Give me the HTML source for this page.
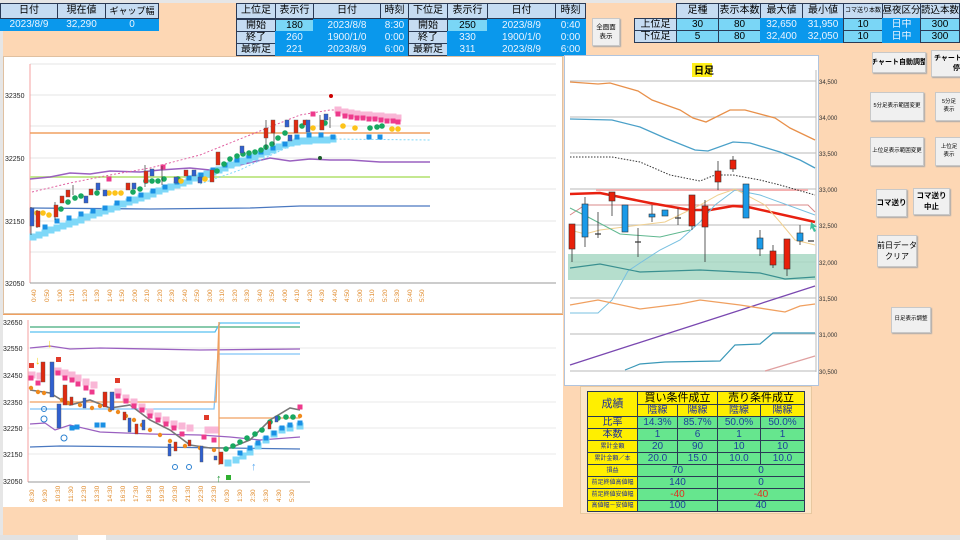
<!DOCTYPE html>
<html><head><meta charset="utf-8">
<style>
*{margin:0;padding:0;box-sizing:border-box}
body{width:960px;height:540px;overflow:hidden;background:#fdd7b4;font-family:"Liberation Sans","Noto Sans CJK JP",sans-serif;position:relative}
.c{position:absolute;display:flex;align-items:center;justify-content:center;font-size:10px;line-height:1;white-space:nowrap;overflow:hidden;border:1px solid #2a3a55}
.h{background:#c6dcf2;color:#000}
.b{background:#0a98ec;color:#eaf4ff;border-color:#0a98ec}
.lb{background:#7ad6f6;color:#000}
.btn{position:absolute;background:#f0f0f0;border:1px solid #c8c8c8;box-shadow:1px 1px 1px #aaa;display:flex;align-items:center;justify-content:center;text-align:center;font-size:7px;line-height:1.4;color:#000;white-space:nowrap;overflow:hidden}
.y{background:#ffef00;color:#1d2f9a}
.g{background:#66e68e;color:#1d3f9a}
svg{position:absolute;left:0;top:0}
</style></head><body>
<div style="position:absolute;left:0;top:0;width:960px;height:3px;background:#e6e6e6"></div>
<div style="position:absolute;left:0;top:0;width:3px;height:540px;background:#e6e6e6"></div>
<div style="position:absolute;left:0;top:535px;width:960px;height:5px;background:#e2e2e2"></div>
<div style="position:absolute;left:78px;top:535px;width:28px;height:5px;background:#fff"></div>

<!-- top-left table -->
<div class="c h" style="left:0;top:3px;width:58px;height:16px">日付</div>
<div class="c h" style="left:57px;top:3px;width:49px;height:16px">現在値</div>
<div class="c h" style="left:105px;top:3px;width:54px;height:16px;font-size:9px">ギャップ幅</div>
<div class="c b" style="left:0;top:19px;width:58px;height:12px">2023/8/9</div>
<div class="c b" style="left:57px;top:19px;width:49px;height:12px">32,290</div>
<div class="c b" style="left:105px;top:19px;width:54px;height:12px">0</div>

<!-- middle table -->
<div class="c h" style="left:236px;top:3px;width:40px;height:16px">上位足</div>
<div class="c h" style="left:275px;top:3px;width:39px;height:16px">表示行</div>
<div class="c h" style="left:313px;top:3px;width:68px;height:16px">日付</div>
<div class="c h" style="left:380px;top:3px;width:29px;height:16px">時刻</div>
<div class="c h" style="left:408px;top:3px;width:40px;height:16px">下位足</div>
<div class="c h" style="left:447px;top:3px;width:41px;height:16px">表示行</div>
<div class="c h" style="left:487px;top:3px;width:69px;height:16px">日付</div>
<div class="c h" style="left:555px;top:3px;width:31px;height:16px">時刻</div>

<div class="c h" style="left:236px;top:19px;width:40px;height:13px">開始</div>
<div class="c lb" style="left:275px;top:19px;width:39px;height:13px">180</div>
<div class="c b" style="left:313px;top:19px;width:68px;height:13px">2023/8/8</div>
<div class="c b" style="left:380px;top:19px;width:29px;height:13px">8:30</div>
<div class="c h" style="left:408px;top:19px;width:40px;height:13px">開始</div>
<div class="c lb" style="left:447px;top:19px;width:41px;height:13px">250</div>
<div class="c b" style="left:487px;top:19px;width:69px;height:13px">2023/8/9</div>
<div class="c b" style="left:555px;top:19px;width:31px;height:13px">0:40</div>

<div class="c h" style="left:236px;top:31px;width:40px;height:13px">終了</div>
<div class="c b" style="left:275px;top:31px;width:39px;height:13px">260</div>
<div class="c b" style="left:313px;top:31px;width:68px;height:13px">1900/1/0</div>
<div class="c b" style="left:380px;top:31px;width:29px;height:13px">0:00</div>
<div class="c h" style="left:408px;top:31px;width:40px;height:13px">終了</div>
<div class="c b" style="left:447px;top:31px;width:41px;height:13px">330</div>
<div class="c b" style="left:487px;top:31px;width:69px;height:13px">1900/1/0</div>
<div class="c b" style="left:555px;top:31px;width:31px;height:13px">0:00</div>

<div class="c h" style="left:236px;top:43px;width:40px;height:13px">最新足</div>
<div class="c b" style="left:275px;top:43px;width:39px;height:13px">221</div>
<div class="c b" style="left:313px;top:43px;width:68px;height:13px">2023/8/9</div>
<div class="c b" style="left:380px;top:43px;width:29px;height:13px">6:00</div>
<div class="c h" style="left:408px;top:43px;width:40px;height:13px">最新足</div>
<div class="c b" style="left:447px;top:43px;width:41px;height:13px">311</div>
<div class="c b" style="left:487px;top:43px;width:69px;height:13px">2023/8/9</div>
<div class="c b" style="left:555px;top:43px;width:31px;height:13px">6:00</div>

<div class="btn" style="left:592px;top:18px;width:28px;height:28px;font-size:6.5px">全画面<br>表示</div>

<!-- right table -->
<div class="c h" style="left:676px;top:3px;width:43px;height:16px">足種</div>
<div class="c h" style="left:718px;top:3px;width:43px;height:16px">表示本数</div>
<div class="c h" style="left:760px;top:3px;width:43px;height:16px">最大値</div>
<div class="c h" style="left:802px;top:3px;width:42px;height:16px">最小値</div>
<div class="c h" style="left:843px;top:3px;width:40px;height:16px;font-size:6px">コマ送り本数</div>
<div class="c h" style="left:882px;top:3px;width:39px;height:16px;font-size:9.5px">昼夜区分</div>
<div class="c h" style="left:920px;top:3px;width:40px;height:16px;font-size:9.5px">読込本数</div>
<div class="c h" style="left:634px;top:18px;width:43px;height:13px">上位足</div>
<div class="c lb" style="left:676px;top:18px;width:43px;height:13px">30</div>
<div class="c lb" style="left:718px;top:18px;width:43px;height:13px">80</div>
<div class="c b" style="left:760px;top:18px;width:43px;height:13px">32,650</div>
<div class="c b" style="left:802px;top:18px;width:42px;height:13px">31,950</div>
<div class="c lb" style="left:843px;top:18px;width:40px;height:13px">10</div>
<div class="c b" style="left:882px;top:18px;width:39px;height:13px">日中</div>
<div class="c lb" style="left:920px;top:18px;width:40px;height:13px">300</div>
<div class="c h" style="left:634px;top:30px;width:43px;height:13px">下位足</div>
<div class="c lb" style="left:676px;top:30px;width:43px;height:13px">5</div>
<div class="c lb" style="left:718px;top:30px;width:43px;height:13px">80</div>
<div class="c b" style="left:760px;top:30px;width:43px;height:13px">32,400</div>
<div class="c b" style="left:802px;top:30px;width:42px;height:13px">32,050</div>
<div class="c lb" style="left:843px;top:30px;width:40px;height:13px">10</div>
<div class="c b" style="left:882px;top:30px;width:39px;height:13px">日中</div>
<div class="c lb" style="left:920px;top:30px;width:40px;height:13px">300</div>

<!-- buttons -->
<div class="btn" style="left:872px;top:52px;width:54px;height:21px;font-size:7px;font-weight:bold">チャート自動調整</div>
<div class="btn" style="left:931px;top:50px;width:32px;height:27px;font-size:7px;font-weight:bold;justify-content:flex-start;padding-left:2px">チャート自<br>&nbsp;&nbsp;&nbsp;&nbsp;&nbsp;停</div>
<div class="btn" style="left:870px;top:92px;width:54px;height:29px;font-size:5.5px">5分足表示範囲変更</div>
<div class="btn" style="left:935px;top:92px;width:28px;height:29px;font-size:5.5px">5分足<br>表示</div>
<div class="btn" style="left:870px;top:137px;width:54px;height:29px;font-size:5.5px">上位足表示範囲変更</div>
<div class="btn" style="left:935px;top:137px;width:28px;height:29px;font-size:5.5px">上位足<br>表示</div>
<div class="btn" style="left:876px;top:189px;width:31px;height:28px;font-size:7.5px;font-weight:bold">コマ送り</div>
<div class="btn" style="left:913px;top:188px;width:37px;height:27px;font-size:7.5px;font-weight:bold">コマ送り<br>中止</div>
<div class="btn" style="left:877px;top:235px;width:40px;height:32px;font-size:8px">前日データ<br>クリア</div>
<div class="btn" style="left:891px;top:307px;width:40px;height:26px;font-size:5.5px">日足表示調整</div>

<!-- chart 1 -->
<div style="position:absolute;left:3px;top:56px;width:560px;height:258px;background:#fff;border:1px solid #e0c0a0"></div>
<!-- chart 2 -->
<div style="position:absolute;left:3px;top:314px;width:560px;height:193px;background:#fff;border-top:1px solid #f0a060"></div>
<!-- daily -->
<div style="position:absolute;left:564px;top:55px;width:255px;height:331px;background:#fff;border:1px solid #b0c4de"></div>

<svg width="960" height="540" viewBox="0 0 960 540" font-family="Liberation Sans, sans-serif">
<defs>
<marker id="sL" markerWidth="7" markerHeight="7" refX="3.5" refY="3.5" markerUnits="userSpaceOnUse"><rect width="7" height="7" fill="#7fd8f8"/></marker>
<marker id="sB" markerWidth="5" markerHeight="5" refX="2.5" refY="2.5" markerUnits="userSpaceOnUse"><rect width="5" height="5" fill="#1a90e4"/></marker>
<marker id="sP" markerWidth="7" markerHeight="7" refX="3.5" refY="3.5" markerUnits="userSpaceOnUse"><rect width="7" height="7" fill="#f9b6d6"/></marker>
<marker id="sK" markerWidth="5" markerHeight="5" refX="2.5" refY="2.5" markerUnits="userSpaceOnUse"><rect width="5" height="5" fill="#ee3a8c"/></marker>
<marker id="cG" markerWidth="6" markerHeight="6" refX="3" refY="3" markerUnits="userSpaceOnUse"><circle cx="3" cy="3" r="2.8" fill="#18a860"/></marker>
<marker id="cY" markerWidth="6" markerHeight="6" refX="3" refY="3" markerUnits="userSpaceOnUse"><circle cx="3" cy="3" r="2.8" fill="#fdc31a"/></marker>
<marker id="cO" markerWidth="5" markerHeight="5" refX="2.5" refY="2.5" markerUnits="userSpaceOnUse"><circle cx="2.5" cy="2.5" r="2.2" fill="#f08a1c"/></marker>
</defs>

<!-- ===== chart1 ===== -->
<g stroke="#e4e4e4" stroke-width="1">
<line x1="30" x2="556" y1="64" y2="64"/><line x1="30" x2="556" y1="95" y2="95"/><line x1="30" x2="556" y1="126" y2="126"/><line x1="30" x2="556" y1="158" y2="158"/><line x1="30" x2="556" y1="189" y2="189"/><line x1="30" x2="556" y1="221" y2="221"/><line x1="30" x2="556" y1="252" y2="252"/>
</g>
<line x1="30" y1="64" x2="30" y2="283" stroke="#f4a0a0"/>
<line x1="30" y1="283" x2="556" y2="283" stroke="#999"/>
<g font-size="7" fill="#222"><text x="5" y="98">32350</text><text x="5" y="161">32250</text><text x="5" y="224">32150</text><text x="5" y="286">32050</text></g>
<g fill="#e08a2a" font-size="6.5">
<text transform="translate(36,302) rotate(-90)">0:40</text><text transform="translate(49,302) rotate(-90)">0:50</text><text transform="translate(62,302) rotate(-90)">1:00</text><text transform="translate(74,302) rotate(-90)">1:10</text><text transform="translate(87,302) rotate(-90)">1:20</text><text transform="translate(99,302) rotate(-90)">1:30</text><text transform="translate(112,302) rotate(-90)">1:40</text><text transform="translate(124,302) rotate(-90)">1:50</text><text transform="translate(137,302) rotate(-90)">2:00</text><text transform="translate(149,302) rotate(-90)">2:10</text><text transform="translate(162,302) rotate(-90)">2:20</text><text transform="translate(174,302) rotate(-90)">2:30</text><text transform="translate(187,302) rotate(-90)">2:40</text><text transform="translate(199,302) rotate(-90)">2:50</text><text transform="translate(212,302) rotate(-90)">3:00</text><text transform="translate(224,302) rotate(-90)">3:10</text><text transform="translate(237,302) rotate(-90)">3:20</text><text transform="translate(249,302) rotate(-90)">3:30</text><text transform="translate(262,302) rotate(-90)">3:40</text><text transform="translate(274,302) rotate(-90)">3:50</text><text transform="translate(287,302) rotate(-90)">4:00</text><text transform="translate(299,302) rotate(-90)">4:10</text><text transform="translate(312,302) rotate(-90)">4:20</text><text transform="translate(324,302) rotate(-90)">4:30</text><text transform="translate(337,302) rotate(-90)">4:40</text><text transform="translate(349,302) rotate(-90)">4:50</text><text transform="translate(362,302) rotate(-90)">5:00</text><text transform="translate(374,302) rotate(-90)">5:10</text><text transform="translate(387,302) rotate(-90)">5:20</text><text transform="translate(399,302) rotate(-90)">5:30</text><text transform="translate(412,302) rotate(-90)">5:40</text><text transform="translate(424,302) rotate(-90)">5:50</text>
</g>
<line x1="30" y1="133" x2="430" y2="133" stroke="#f0a060" stroke-width="1.5"/>
<line x1="30" y1="177" x2="430" y2="177" stroke="#c4e890" stroke-width="2"/>
<polyline fill="none" stroke="#4a78c0" stroke-width="1.3" points="30,208 150,209 250,208 300,206 430,206"/>
<polyline fill="none" stroke="#9a60c0" stroke-width="1.5" points="30,179 50,177 70,173 90,174 110,171 140,172 160,170 190,168 210,170 240,165 270,158 290,161 310,159 330,160 350,160 380,162 430,162"/>
<polyline fill="none" stroke="#e060a0" stroke-width="1" stroke-dasharray="2,2" points="32,192 70,183 110,175 150,168 200,155 250,135 300,115 330,110 350,110"/>
<polyline fill="none" stroke="#7fd8f8" stroke-width="1" stroke-dasharray="2,2" points="200,184 240,170 290,146 330,139 430,140"/>
<polyline fill="none" stroke="none" marker-start="url(#sL)" marker-mid="url(#sL)" marker-end="url(#sL)" points="33,237 39,235 45,233 51,230 57,228 63,226 69,224 75,222 81,220 87,217 93,215 99,213 105,211 111,209 117,207 123,204 129,202 135,200 141,198 147,196 153,194 159,191 165,189 171,187 177,185 183,183 189,181 195,178 201,176 207,174 213,172 219,170 225,168 231,165 237,163 243,161 249,159 255,157 261,154 267,152 273,150 279,147 285,145 291,143 297,142 303,141 309,141 315,140 321,140 327,140 333,139"/>
<polyline fill="none" stroke="none" marker-start="url(#sB)" marker-mid="url(#sB)" marker-end="url(#sB)" points="45,227 57,221 69,218 81,214 93,211 105,208 117,203 129,199 141,195 153,191 165,187 177,182 189,178 201,175 213,170 225,165 237,160 249,156 261,152 273,148 285,144 297,137 309,135 321,135 333,137 369,137 380,137"/>
<polyline fill="none" stroke="none" marker-start="url(#cG)" marker-mid="url(#cG)" marker-end="url(#cG)" points="61,209 68,202 75,198 81,196 97,193 133,192 140,189 146,181 152,181 158,181 164,179 178,179 217,171 224,164 230,159 237,156 243,154 249,153 255,152 261,150 266,147 272,144 278,138 285,133 302,126 325,123 370,128 377,127 382,126"/>
<polyline fill="none" stroke="none" marker-start="url(#cY)" marker-mid="url(#cY)" marker-end="url(#cY)" points="37,213 43,213 49,215 109,193 115,193 121,193 181,181 205,179 313,128 343,126 355,128 392,129 398,129"/>
<polyline fill="none" stroke="none" marker-start="url(#sP)" marker-mid="url(#sP)" marker-end="url(#sP)" points="338,110 345,112 351,113 357,114 363,115 369,115 375,116 381,116 387,117 393,117 398,118"/>
<polyline fill="none" stroke="none" marker-start="url(#sK)" marker-mid="url(#sK)" marker-end="url(#sK)" points="109,179 163,167 313,114 338,114 345,116 351,117 357,118 363,118 369,119 375,119 381,120 387,121 393,121 398,122"/>
<circle cx="331" cy="96" r="2" fill="#c00"/><circle cx="320" cy="158" r="2" fill="#1a5a2a"/>
<g stroke="#333" stroke-width="0.7">
<line x1="31" y1="207" x2="31" y2="235"/><line x1="37" y1="210" x2="37" y2="228"/><line x1="55" y1="202" x2="55" y2="220"/><line x1="73" y1="185" x2="73" y2="195"/><line x1="145" y1="165" x2="145" y2="187"/><line x1="162" y1="166" x2="162" y2="185"/><line x1="266" y1="120" x2="266" y2="150"/><line x1="274" y1="120" x2="274" y2="145"/><line x1="320" y1="115" x2="320" y2="130"/><line x1="330" y1="117" x2="330" y2="128"/>
</g>
<g fill="#e02a10" stroke="#555" stroke-width="0.4">
<rect x="36" y="211" width="4" height="16"/><rect x="54" y="205" width="4" height="12"/><rect x="60" y="196" width="4" height="7"/><rect x="66" y="190" width="4" height="7"/><rect x="89" y="189" width="4" height="6"/><rect x="126" y="183" width="4" height="7"/><rect x="144" y="171" width="4" height="12"/><rect x="184" y="170" width="4" height="6"/><rect x="210" y="170" width="4" height="12"/><rect x="216" y="152" width="4" height="13"/><rect x="264" y="128" width="4" height="10"/><rect x="271" y="120" width="4" height="13"/><rect x="294" y="120" width="4" height="13"/><rect x="303" y="120" width="4" height="5"/><rect x="320" y="120" width="4" height="10"/>
</g>
<g fill="#3060d0" stroke="#555" stroke-width="0.4">
<rect x="30" y="208" width="4" height="18"/><rect x="84" y="196" width="4" height="7"/><rect x="96" y="183" width="4" height="7"/><rect x="103" y="190" width="4" height="6"/><rect x="132" y="183" width="4" height="6"/><rect x="150" y="169" width="4" height="7"/><rect x="174" y="177" width="4" height="6"/><rect x="192" y="170" width="4" height="6"/><rect x="198" y="177" width="4" height="6"/><rect x="240" y="146" width="4" height="7"/><rect x="285" y="120" width="4" height="7"/><rect x="288" y="135" width="4" height="6"/><rect x="306" y="120" width="4" height="12"/><rect x="324" y="114" width="4" height="6"/>
</g>

<!-- ===== chart2 ===== -->
<g stroke="#e8e8e8"><line x1="28" x2="556" y1="348" y2="348"/><line x1="28" x2="556" y1="375" y2="375"/><line x1="28" x2="556" y1="402" y2="402"/><line x1="28" x2="556" y1="428" y2="428"/><line x1="28" x2="556" y1="454" y2="454"/></g>
<line x1="28" y1="320" x2="28" y2="482" stroke="#f4a0a0"/>
<line x1="28" y1="482" x2="310" y2="482" stroke="#999"/>
<g font-size="7" fill="#222"><text x="3" y="325">32650</text><text x="3" y="351">32550</text><text x="3" y="378">32450</text><text x="3" y="405">32350</text><text x="3" y="431">32250</text><text x="3" y="457">32150</text><text x="3" y="484">32050</text></g>
<g fill="#e08a2a" font-size="6.5">
<text transform="translate(34,502) rotate(-90)">8:30</text><text transform="translate(47,502) rotate(-90)">9:30</text><text transform="translate(60,502) rotate(-90)">10:30</text><text transform="translate(73,502) rotate(-90)">11:30</text><text transform="translate(86,502) rotate(-90)">12:30</text><text transform="translate(99,502) rotate(-90)">13:30</text><text transform="translate(112,502) rotate(-90)">14:30</text><text transform="translate(125,502) rotate(-90)">16:30</text><text transform="translate(138,502) rotate(-90)">17:30</text><text transform="translate(151,502) rotate(-90)">18:30</text><text transform="translate(164,502) rotate(-90)">19:30</text><text transform="translate(177,502) rotate(-90)">20:30</text><text transform="translate(190,502) rotate(-90)">21:30</text><text transform="translate(203,502) rotate(-90)">22:30</text><text transform="translate(216,502) rotate(-90)">23:30</text><text transform="translate(229,502) rotate(-90)">0:30</text><text transform="translate(242,502) rotate(-90)">1:30</text><text transform="translate(255,502) rotate(-90)">2:30</text><text transform="translate(268,502) rotate(-90)">3:30</text><text transform="translate(281,502) rotate(-90)">4:30</text><text transform="translate(294,502) rotate(-90)">5:30</text>
</g>
<line x1="30" y1="327" x2="300" y2="327" stroke="#60b890" stroke-width="1.5"/>
<polyline fill="none" stroke="#58c0f0" stroke-width="1.3" points="30,332 215,332 220,323 300,323"/>
<polyline fill="none" stroke="#9a60c0" stroke-width="1.3" points="30,348 50,346 70,349 100,348 200,350 300,349"/>
<polyline fill="none" stroke="#80c4f8" stroke-width="1.3" points="30,409 214,409 218,354 300,354"/>
<polyline fill="none" stroke="#f0a060" stroke-width="1.3" points="30,402 216,402 219,322 219,465 219,418 300,418"/>
<polyline fill="none" stroke="#4a78c0" stroke-width="1.2" points="30,447 60,446 150,447 300,449"/>
<polyline fill="none" stroke="#9a60c0" stroke-width="1.2" points="30,424 45,423 55,430 70,425 100,432 150,434 200,435 230,437 260,440 300,437"/>
<polyline fill="none" stroke="#777" stroke-width="1.6" points="30,390 50,393 70,405 90,400 110,408 130,405 150,420 170,430 190,445 210,448 230,448 250,440 270,420 290,408 300,410"/>
<polyline fill="none" stroke="none" marker-start="url(#sP)" marker-mid="url(#sP)" marker-end="url(#sP)" points="32,375 40,376 58,371 65,373 72,375 78,378 86,382 94,385 118,392 126,398 134,402 142,407 150,412 158,416 166,420 174,424 182,426 190,428 208,430 215,430"/>
<polyline fill="none" stroke="none" marker-start="url(#sK)" marker-mid="url(#sK)" marker-end="url(#sK)" points="31,378 38,383 58,373 65,378 72,380 78,384 86,388 92,392 118,396 126,401 134,406 142,410 150,416 158,420 166,424 174,428 182,434 204,437 214,440 300,407"/>
<polyline fill="none" stroke="none" marker-start="url(#cO)" marker-mid="url(#cO)" marker-end="url(#cO)" points="31,388 38,392 44,393 62,400 68,403 80,405 92,408 100,406 110,410 118,412 126,416 134,420 142,425 150,430 160,435 170,441 185,446 200,448 214,450 270,422 300,416"/>
<polyline fill="none" stroke="none" marker-start="url(#sL)" marker-mid="url(#sL)" marker-end="url(#sL)" points="228,463 236,460 243,456 250,452 258,446 266,440 274,434 282,430 290,428 300,426"/>
<polyline fill="none" stroke="none" marker-start="url(#sB)" marker-mid="url(#sB)" marker-end="url(#sB)" points="72,428 77,427 97,425 103,425 240,453 250,448 258,443 266,438 274,433 282,428 290,425 300,423"/>
<polyline fill="none" stroke="none" marker-start="url(#cG)" marker-mid="url(#cG)" marker-end="url(#cG)" points="226,449 233,446 240,442 247,438 255,434 262,430 270,422 278,418 286,417 293,417"/>
<g fill="#e02a10" stroke="#555" stroke-width="0.4"><rect x="41" y="362" width="4" height="20"/><rect x="63" y="385" width="4" height="20"/><rect x="70" y="397" width="3" height="8"/><rect x="103" y="392" width="4" height="15"/><rect x="123" y="412" width="3" height="8"/><rect x="135" y="424" width="3" height="10"/><rect x="174" y="442" width="3" height="9"/><rect x="188" y="440" width="3" height="6"/><rect x="219" y="452" width="4" height="12"/><rect x="268" y="421" width="3" height="8"/></g>
<g fill="#3060d0" stroke="#555" stroke-width="0.4"><rect x="50" y="362" width="4" height="35"/><rect x="57" y="404" width="4" height="24"/><rect x="83" y="398" width="3" height="10"/><rect x="110" y="392" width="4" height="18"/><rect x="128" y="418" width="3" height="14"/><rect x="142" y="420" width="3" height="10"/><rect x="168" y="444" width="3" height="12"/><rect x="200" y="446" width="3" height="16"/><rect x="214" y="456" width="3" height="4"/><rect x="275" y="416" width="3" height="6"/></g>
<g font-size="6" font-weight="bold">
<rect x="29" y="363" width="5" height="5" fill="#e03a2a"/><rect x="56" y="357" width="5" height="5" fill="#e03a2a"/><rect x="115" y="378" width="5" height="5" fill="#e03a2a"/><rect x="204" y="415" width="5" height="5" fill="#e03a2a"/><rect x="226" y="475" width="5" height="5" fill="#30b030"/>
<text x="47" y="347" fill="#f0d000" font-size="11">↓</text><text x="35" y="364" fill="#f0d000" font-size="11">↓</text>
<text x="216" y="482" fill="#2a9a40" font-size="11">↑</text><text x="251" y="470" fill="#58a8f0" font-size="11">↑</text>
</g>
<g fill="none" stroke="#2a80d0" stroke-width="1"><circle cx="44" cy="409" r="2.5"/><circle cx="44" cy="419" r="3"/><circle cx="64" cy="438" r="3"/><circle cx="175" cy="467" r="2.5"/><circle cx="189" cy="467" r="2.5"/></g>

<!-- ===== daily chart ===== -->
<rect x="692" y="63" width="20" height="14" fill="#ffef1a"/>
<text x="694" y="74" font-size="10" font-weight="bold" font-family="Noto Sans CJK JP, sans-serif">日足</text>
<g stroke="#c8c8c8" stroke-width="1.2"><line x1="570" x2="816" y1="81" y2="81"/><line x1="570" x2="816" y1="117" y2="117"/><line x1="570" x2="816" y1="153" y2="153"/><line x1="570" x2="816" y1="189" y2="189"/><line x1="570" x2="816" y1="225" y2="225"/><line x1="570" x2="816" y1="262" y2="262"/><line x1="570" x2="816" y1="298" y2="298"/><line x1="570" x2="816" y1="334" y2="334"/><line x1="570" x2="816" y1="371" y2="371"/></g>
<line x1="816" y1="70" x2="816" y2="372" stroke="#bbb"/>
<g font-size="6" fill="#333"><text x="819" y="84">34,500</text><text x="819" y="120">34,000</text><text x="819" y="156">33,500</text><text x="819" y="192">33,000</text><text x="819" y="228">32,500</text><text x="819" y="265">32,000</text><text x="819" y="301">31,500</text><text x="819" y="337">31,000</text><text x="819" y="374">30,500</text></g>
<rect x="568" y="254" width="248" height="26" fill="#a8d8c4" opacity="0.85"/>
<line x1="596" y1="190" x2="808" y2="190" stroke="#f4b0b0" stroke-width="2"/>
<polyline fill="none" stroke="#d88888" stroke-width="1" points="570,215 585,205 808,205 815,212"/>
<polyline fill="none" stroke="#e8904a" stroke-width="1.3" points="570,82 598,84 610,83 638,91 652,100 680,110 693,118 706,122 730,110 745,110 775,118 790,128 815,140"/>
<polyline fill="none" stroke="#4aa0c8" stroke-width="1.3" points="570,119 612,120 640,127 665,138 695,150 708,151 733,142 750,143 780,152 800,160 815,168"/>
<polyline fill="none" stroke="#333" stroke-width="1" stroke-dasharray="1.5,1.5" points="570,157 612,157 640,162 670,175 700,181 715,175 733,175 760,180 780,185 815,195"/>
<polyline fill="none" stroke="#e82010" stroke-width="2.5" points="570,194 600,193 610,195 650,203 690,210 710,210 733,206 748,207 815,222"/>
<polyline fill="none" stroke="#78c0e0" stroke-width="1" points="570,313 598,313 612,300 628,271 640,263 660,250 680,240 700,222 715,205 735,190 760,195 815,215"/>
<polyline fill="none" stroke="#f0d090" stroke-width="1" points="570,230 585,234 600,230 640,225 665,222 700,205 718,195 735,189 765,205 780,222 795,240 815,245"/>
<polyline fill="none" stroke="#60b890" stroke-width="1" points="570,208 588,217 620,234 660,237 690,230"/>
<polyline fill="none" stroke="#3a9090" stroke-width="1.2" points="570,268 600,264 640,272 700,270 760,273 785,279 815,277"/>
<polyline fill="none" stroke="#7a48b0" stroke-width="1.3" points="570,365 815,286"/>
<polyline fill="none" stroke="#f0a060" stroke-width="1.3" points="570,305 598,300 640,309 680,304 700,300 740,305 785,312 800,306 815,304"/>
<polyline fill="none" stroke="#3a98b8" stroke-width="1.2" points="625,370 640,364 665,362 720,361 735,345 760,344 773,333 815,333"/>
<polyline fill="none" stroke="#e0a0a0" stroke-width="1.2" points="765,371 815,356"/>
<g stroke="#333" stroke-width="0.8"><line x1="572" y1="224" x2="572" y2="262"/><line x1="585" y1="197" x2="585" y2="247"/><line x1="598" y1="212" x2="598" y2="238"/><line x1="612" y1="192" x2="612" y2="216"/><line x1="638" y1="228" x2="638" y2="257"/><line x1="652" y1="205" x2="652" y2="222"/><line x1="678" y1="208" x2="678" y2="225"/><line x1="692" y1="195" x2="692" y2="230"/><line x1="705" y1="200" x2="705" y2="262"/><line x1="718" y1="161" x2="718" y2="190"/><line x1="733" y1="156" x2="733" y2="172"/><line x1="760" y1="230" x2="760" y2="256"/><line x1="773" y1="245" x2="773" y2="268"/><line x1="787" y1="239" x2="787" y2="276"/><line x1="800" y1="225" x2="800" y2="245"/></g>
<g fill="#e8200a" stroke="#333" stroke-width="0.6"><rect x="569" y="224" width="6" height="25"/><rect x="609" y="192" width="6" height="9"/><rect x="689" y="195" width="6" height="31"/><rect x="702" y="206" width="6" height="21"/><rect x="715" y="171" width="6" height="11"/><rect x="730" y="160" width="6" height="9"/><rect x="770" y="251" width="6" height="14"/><rect x="784" y="239" width="6" height="30"/></g>
<g fill="#1a9ae8" stroke="#333" stroke-width="0.6"><rect x="582" y="204" width="6" height="33"/><rect x="622" y="205" width="6" height="27"/><rect x="649" y="214" width="6" height="3"/><rect x="662" y="210" width="6" height="6"/><rect x="743" y="184" width="6" height="34"/><rect x="757" y="238" width="6" height="11"/><rect x="797" y="233" width="6" height="8"/></g>
<g stroke="#333" stroke-width="1.2"><line x1="595" y1="234" x2="601" y2="234"/><line x1="635" y1="242" x2="641" y2="242"/><line x1="675" y1="218" x2="681" y2="218"/><line x1="808" y1="241" x2="814" y2="241"/></g>
<path d="M811,222 l6,5 -3,0 2,4 -2,1 -2,-4 -2,2z" fill="#40c0a0"/>
</svg>

<!-- stats table -->
<div style="position:absolute;left:580px;top:386px;width:232px;height:128px;background:#fde6c8;border:1px solid #e8c8a0"></div>
<div style="position:absolute;left:587px;top:391px;font-size:10px;font-family:'Liberation Sans','Noto Sans CJK JP',sans-serif">
<div class="c y" style="left:0;top:0;width:51px;height:26px;font-size:11px">成績</div>
<div class="c y" style="left:50px;top:0;width:81px;height:14px;color:#000;font-size:11px">買い条件成立</div>
<div class="c y" style="left:130px;top:0;width:88px;height:14px;color:#000;font-size:11px">売り条件成立</div>
<div class="c y" style="left:50px;top:13px;width:41px;height:13px">陰線</div>
<div class="c y" style="left:90px;top:13px;width:41px;height:13px">陽線</div>
<div class="c y" style="left:130px;top:13px;width:44px;height:13px">陰線</div>
<div class="c y" style="left:173px;top:13px;width:45px;height:13px">陽線</div>

<div class="c y" style="left:0;top:25px;width:51px;height:13px">比率</div>
<div class="c g" style="left:50px;top:25px;width:41px;height:13px">14.3%</div><div class="c g" style="left:90px;top:25px;width:41px;height:13px">85.7%</div><div class="c g" style="left:130px;top:25px;width:44px;height:13px">50.0%</div><div class="c g" style="left:173px;top:25px;width:45px;height:13px">50.0%</div>
<div class="c y" style="left:0;top:37px;width:51px;height:13px">本数</div>
<div class="c g" style="left:50px;top:37px;width:41px;height:13px">1</div><div class="c g" style="left:90px;top:37px;width:41px;height:13px">6</div><div class="c g" style="left:130px;top:37px;width:44px;height:13px">1</div><div class="c g" style="left:173px;top:37px;width:45px;height:13px">1</div>
<div class="c y" style="left:0;top:49px;width:51px;height:13px;font-size:6px">累計金額</div>
<div class="c g" style="left:50px;top:49px;width:41px;height:13px">20</div><div class="c g" style="left:90px;top:49px;width:41px;height:13px">90</div><div class="c g" style="left:130px;top:49px;width:44px;height:13px">10</div><div class="c g" style="left:173px;top:49px;width:45px;height:13px">10</div>
<div class="c y" style="left:0;top:61px;width:51px;height:13px;font-size:6px">累計金額／本</div>
<div class="c g" style="left:50px;top:61px;width:41px;height:13px">20.0</div><div class="c g" style="left:90px;top:61px;width:41px;height:13px">15.0</div><div class="c g" style="left:130px;top:61px;width:44px;height:13px">10.0</div><div class="c g" style="left:173px;top:61px;width:45px;height:13px">10.0</div>
<div class="c y" style="left:0;top:73px;width:51px;height:13px;font-size:6px">損益</div>
<div class="c g" style="left:50px;top:73px;width:81px;height:13px">70</div><div class="c g" style="left:130px;top:73px;width:88px;height:13px">0</div>
<div class="c y" style="left:0;top:85px;width:51px;height:13px;font-size:6px">前足終値高値幅</div>
<div class="c g" style="left:50px;top:85px;width:81px;height:13px">140</div><div class="c g" style="left:130px;top:85px;width:88px;height:13px">0</div>
<div class="c y" style="left:0;top:97px;width:51px;height:13px;font-size:6px">前足終値安値幅</div>
<div class="c g" style="left:50px;top:97px;width:81px;height:13px;color:#e03020">-40</div><div class="c g" style="left:130px;top:97px;width:88px;height:13px;color:#e03020">-40</div>
<div class="c y" style="left:0;top:109px;width:51px;height:12px;font-size:6px">高値幅－安値幅</div>
<div class="c g" style="left:50px;top:109px;width:81px;height:12px">100</div><div class="c g" style="left:130px;top:109px;width:88px;height:12px">40</div>
</div>
</body></html>
